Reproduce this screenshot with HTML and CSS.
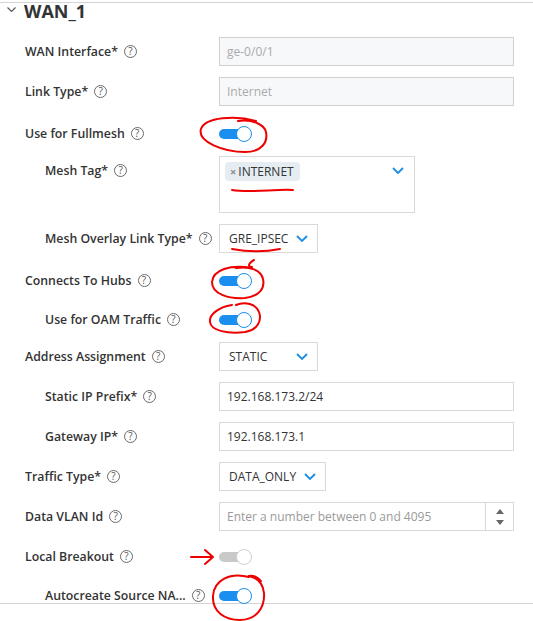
FILE: index.html
```html
<!DOCTYPE html>
<html>
<head>
<meta charset="utf-8">
<link rel="stylesheet" href="styles.css">
</head>
<body>
<div class="panel">
  <div class="section">
    <div class="head">
      <svg class="head-chev" width="9" height="5" viewBox="0 0 9 5"><polyline points="0.5,0.5 4.5,4.5 8.5,0.5" fill="none" stroke="#555" stroke-width="1.1"/></svg>
      <span class="title">WAN_1</span>
    </div>
    <div class="form">
      <div class="row">
        <div class="lab"><span class="txt">WAN Interface*</span><span class="help">?</span></div>
        <div class="input disabled">ge-0/0/1</div>
      </div>
      <div class="row">
        <div class="lab"><span class="txt">Link Type*</span><span class="help">?</span></div>
        <div class="input disabled">Internet</div>
      </div>
      <div class="row trow">
        <div class="lab"><span class="txt">Use for Fullmesh</span><span class="help">?</span></div>
        <div class="toggle on"><span class="track"></span><span class="thumb"></span></div>
      </div>
      <div class="row tall">
        <div class="lab sub"><span class="txt">Mesh Tag*</span><span class="help">?</span></div>
        <div class="multi">
          <span class="chip"><span class="x">×</span>INTERNET</span>
          <svg class="chev multi-chev" width="12" height="7" viewBox="0 0 12 7"><polyline points="1,1 6,6 11,1" fill="none" stroke="#1a8de6" stroke-width="1.8"/></svg>
        </div>
      </div>
      <div class="row">
        <div class="lab sub"><span class="txt">Mesh Overlay Link Type*</span><span class="help">?</span></div>
        <div class="select"><span>GRE_IPSEC</span><svg class="chev" width="12" height="7" viewBox="0 0 12 7"><polyline points="1,1 6,6 11,1" fill="none" stroke="#1a8de6" stroke-width="1.8"/></svg></div>
      </div>
      <div class="row trow">
        <div class="lab"><span class="txt">Connects To Hubs</span><span class="help">?</span></div>
        <div class="toggle on"><span class="track"></span><span class="thumb"></span></div>
      </div>
      <div class="row trow">
        <div class="lab sub"><span class="txt">Use for OAM Traffic</span><span class="help">?</span></div>
        <div class="toggle on"><span class="track"></span><span class="thumb"></span></div>
      </div>
      <div class="row">
        <div class="lab"><span class="txt">Address Assignment</span><span class="help">?</span></div>
        <div class="select"><span>STATIC</span><svg class="chev" width="12" height="7" viewBox="0 0 12 7"><polyline points="1,1 6,6 11,1" fill="none" stroke="#1a8de6" stroke-width="1.8"/></svg></div>
      </div>
      <div class="row">
        <div class="lab sub"><span class="txt">Static IP Prefix*</span><span class="help">?</span></div>
        <div class="input">192.168.173.2/24</div>
      </div>
      <div class="row">
        <div class="lab sub"><span class="txt">Gateway IP*</span><span class="help">?</span></div>
        <div class="input">192.168.173.1</div>
      </div>
      <div class="row">
        <div class="lab"><span class="txt">Traffic Type*</span><span class="help">?</span></div>
        <div class="select"><span>DATA_ONLY</span><svg class="chev" width="12" height="7" viewBox="0 0 12 7"><polyline points="1,1 6,6 11,1" fill="none" stroke="#1a8de6" stroke-width="1.8"/></svg></div>
      </div>
      <div class="row">
        <div class="lab"><span class="txt">Data VLAN Id</span><span class="help">?</span></div>
        <div class="number">
          <span class="ph">Enter a number between 0 and 4095</span>
          <span class="spin"><span class="up"></span><span class="down"></span></span>
        </div>
      </div>
      <div class="row trow late">
        <div class="lab"><span class="txt">Local Breakout</span><span class="help">?</span></div>
        <div class="toggle off"><span class="track"></span><span class="thumb"></span></div>
      </div>
      <div class="row trow">
        <div class="lab sub"><span class="txt">Autocreate Source NA...</span><span class="help">?</span></div>
        <div class="toggle on"><span class="track"></span><span class="thumb"></span></div>
      </div>
    </div>
  </div>
  <svg class="marks" width="533" height="621" viewBox="0 0 533 621">
    <g fill="none" stroke="#ee0000" stroke-width="2" stroke-linecap="round" stroke-linejoin="round">
      <path d="M256 121 C236 115 205 117 201 129 C197 142 224 152 245 152 C262 152 268 142 266 132 C264 124 252 119 238 121"/>
      <path d="M232 190 C250 193 275 189 293 190"/>
      <path d="M232 249 C248 252 265 252 280 249"/>
      <path d="M252 267 C246 267 250 262 254 260"/>
      <path d="M252 268 C230 264 213 270 212 282 C212 294 228 299 245 298 C260 296 265 288 263 279 C261 270 250 266 236 268"/>
      <path d="M232 305 C218 307 209 315 210 322 C211 331 228 334 245 332 C258 330 262 320 259 312 C256 304 245 301 236 305"/>
      <path d="M191 557 L213 557 M205 550 L213 557 L205 564"/>
      <path d="M249 577 C230 572 214 580 213 596 C212 612 225 620 240 620 C256 620 265 608 264 593 C263 584 258 578 249 576 C253 575 258 577 261 581"/>
    </g>
  </svg>
</div>
</body>
</html>
```

FILE: styles.css
```css
* { box-sizing: border-box; }
body {
  margin: 0;
  font-family: "Open Sans", "Liberation Sans", sans-serif;
  color: #333;
  background: #fff;
}
.panel {
  position: relative;
  width: 533px;
  height: 621px;
  overflow: hidden;
}
.section {
  margin-top: 2px;
  height: 602px;
  border-top: 1px solid #d4d4d4;
  border-bottom: 1px solid #d4d4d4;
}
.head {
  display: flex;
  height: 16px;
  padding-left: 7px;
}
.head-chev {
  margin-top: 4px;
  margin-right: 8px;
}
.title {
  font-size: 18px;
  font-weight: 700;
  line-height: 16px;
  color: #333;
}
.form {
  padding-left: 25px;
  padding-top: 18px;
}
.row {
  display: flex;
  align-items: center;
  height: 29px;
  margin-bottom: 11px;
}
.row.trow {
  height: 33px;
  margin-bottom: 6px;
}
.row.trow.late {
  margin-top: -2px;
}
.row.tall {
  align-items: flex-start;
  height: 57px;
}
.lab {
  width: 194px;
  flex-shrink: 0;
  display: flex;
  align-items: center;
  font-size: 12.3px;
  font-weight: 600;
  line-height: 29px;
  color: #333;
}
.lab.sub { padding-left: 20px; }
.txt { white-space: nowrap; }
.help {
  width: 13px;
  height: 13px;
  margin-left: 6px;
  border: 1px solid #6a6a6a;
  border-radius: 50%;
  font-size: 10px;
  line-height: 11px;
  text-align: center;
  font-weight: 400;
  color: #555;
  flex-shrink: 0;
}
.input {
  width: 295px;
  height: 29px;
  border: 1px solid #d9d9d9;
  padding: 0 7px;
  display: flex;
  align-items: center;
  font-size: 12px;
  color: #333;
  background: #fff;
}
.input.disabled {
  background: #f7f8fa;
  border-color: #d0d0d0;
  color: #aaa;
}
.select {
  display: flex;
  align-items: center;
  justify-content: space-between;
  gap: 8px;
  min-width: 99px;
  height: 29px;
  padding: 0 9px;
  border: 1px solid #d9d9d9;
  font-size: 12px;
  color: #333;
}
.chev { flex-shrink: 0; }
.multi {
  width: 196px;
  height: 57px;
  border: 1px solid #d9d9d9;
  display: flex;
  justify-content: space-between;
  align-items: flex-start;
  padding: 5px 10px 0 5px;
}
.multi-chev { margin-top: 5px; }
.chip {
  display: inline-flex;
  align-items: center;
  height: 19px;
  padding: 0 6px 0 5px;
  background: #e6edf2;
  border-radius: 4px;
  font-size: 12px;
  color: #333;
}
.chip .x {
  font-size: 11px;
  color: #8a8a8a;
  margin-right: 2px;
  font-weight: 700;
}
.number {
  width: 295px;
  height: 29px;
  border: 1px solid #d9d9d9;
  display: flex;
}
.ph {
  flex: 1;
  padding-left: 7px;
  display: flex;
  align-items: center;
  font-size: 12px;
  color: #9a9a9a;
}
.spin {
  width: 28px;
  border-left: 1px solid #d9d9d9;
  display: flex;
  flex-direction: column;
  align-items: center;
  justify-content: center;
  gap: 6px;
}
.up, .down {
  width: 0;
  height: 0;
  border-left: 4px solid transparent;
  border-right: 4px solid transparent;
}
.up { border-bottom: 5px solid #666; }
.down { border-top: 5px solid #666; }
.toggle {
  position: relative;
  width: 33px;
  height: 16px;
}
.track {
  position: absolute;
  left: 0;
  top: 3px;
  width: 30px;
  height: 10px;
  border-radius: 5px;
  background: #1a8ff0;
}
.thumb {
  position: absolute;
  right: 0;
  top: 0;
  width: 16px;
  height: 16px;
  border-radius: 50%;
  background: #fff;
  border: 1.5px solid #1a8ff0;
}
.toggle.off .track { background: #c9c9c9; }
.toggle.off .thumb { border-color: #d0d0d0; }
.marks {
  position: absolute;
  left: 0;
  top: 0;
  pointer-events: none;
}
```
